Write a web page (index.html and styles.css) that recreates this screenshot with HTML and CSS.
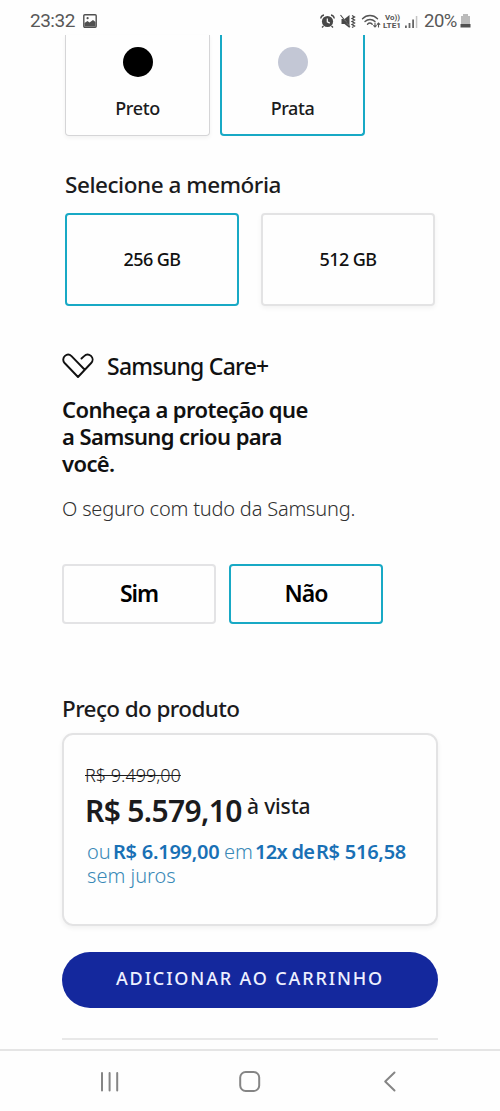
FILE: index.html
```
<!DOCTYPE html>
<html lang="pt-BR">
<head>
<meta charset="utf-8">
<title>Samsung</title>
<link rel="stylesheet" href="styles.css">
</head>
<body>
<header class="status">
  <span class="clock">23:32</span>
  <svg class="photo" width="14" height="14" viewBox="0 0 14 14"><rect x=".8" y=".8" width="12.4" height="12.4" rx="1" fill="none" stroke="#505050" stroke-width="1.4"/><path d="M1.5 9 4.500 7l2 1.500L10 6l2.500 2V12.500h-11z" fill="#505050"/><circle cx="4.600" cy="4.200" r="1.100" fill="#505050"/></svg>
  <svg class="signals" width="101" height="20" viewBox="0 0 101 20">
    <circle cx="7.500" cy="10.500" r="5.600" fill="#484848"/>
    <path d="M.7 7.500C1 5.500 2.200 4.300 4 4M14.300 7.500C14 5.500 12.800 4.300 11 4M3.500 15 2 16.500M11.500 15l1.500 1.500" fill="none" stroke="#484848" stroke-width="1.300"/>
    <path d="M7.300 7.500v3.300l2.500 1.300" fill="none" stroke="#fff" stroke-width="1.200"/>
    <path d="M21.500 8h3l5-4v13l-5-4h-3z" fill="#484848"/>
    <path d="M21 4.500l9.500 12" stroke="#fff" stroke-width=".8"/>
    <path d="M20.500 4l9.500 12" stroke="#484848" stroke-width="1.100"/>
    <path d="M32 4.500l2.500 1.500-2.500 1.500 2.500 1.500-2.500 1.500 2.500 1.500-2.500 1.500 2.500 1.500-2.500 1.500" fill="none" stroke="#484848" stroke-width="1.300"/>
    <g fill="none" stroke="#555" stroke-width="1.400" stroke-linecap="round">
      <path d="M42.500 7.700c4.300-4.300 10.700-4.300 15 0M45 10.600c2.900-2.900 7.100-2.900 10 0M47.500 13.200c1.400-1.400 3.300-1.400 4.700 0"/>
      <path d="M55 12v4m-1.300-1.300L55 16l1.300-1.300M58.500 16v-4m-1.300 1.300 1.300-1.300 1.300 1.300" stroke-width="1.100"/>
    </g>
    <text x="65" y="9" class="volte" textLength="15" lengthAdjust="spacingAndGlyphs">Vo))</text>
    <text x="63" y="17.300" class="volte" textLength="18" lengthAdjust="spacingAndGlyphs">LTE1</text>
    <g fill="#666"><path d="M85 14.500h1.800v2.500H85zM88.600 12h1.800v5h-1.800zM92.200 8.500h1.800v8.500h-1.800z"/><path d="M95.800 5h1.500v12h-1.500z" fill="#c4c4c4"/></g>
  </svg>
  <span class="percent">20%</span>
  <svg class="battery" width="11" height="16" viewBox="0 0 11 16"><path d="M3 1h5v2h2v9H1V3h2z" fill="#bbb"/><path d="M.5 11h10v3.500H.5z" fill="#505050"/></svg>
</header>
<main class="page">
  <div class="colors">
    <div class="color"><i class="dot dot-black"></i><span>Preto</span></div>
    <div class="color selected"><i class="dot dot-silver"></i><span>Prata</span></div>
  </div>
  <h2 class="memory-title">Selecione a memória</h2>
  <div class="memory">
    <div class="size selected">256 GB</div>
    <div class="size">512 GB</div>
  </div>
  <div class="care">
    <svg width="32" height="26" viewBox="0 0 32 26" fill="none" stroke="#111" stroke-width="1.900" stroke-linejoin="round" stroke-linecap="round"><path d="M22.500 16.500 9.500 3.200C7.500 1.200 5.200 1 3 2.900.9 4.800.6 7.800 2.600 10L16 24 29.200 10c2-2.200 1.800-5.200-.2-7.100-2.200-1.900-5-1.700-6.900.2L19.500 5.500"/></svg>
    <span>Samsung Care+</span>
  </div>
  <h3 class="pitch">Conheça a proteção que<br>a Samsung criou para<br>você.</h3>
  <p class="insurance">O seguro com tudo da Samsung.</p>
  <div class="choices">
    <div class="choice">Sim</div>
    <div class="choice selected">Não</div>
  </div>
  <h2 class="price-title">Preço do produto</h2>
  <section class="price">
    <div class="old"><s>R$ 9.499,00</s></div>
    <div class="now"><b>R$ 5.579,10</b><span>à vista</span></div>
    <div class="plan"><span class="ou">ou</span><b class="total">R$ 6.199,00</b><span class="em">em</span><b class="times">12x de</b><b class="part">R$ 516,58</b></div>
    <div class="plan juros">sem juros</div>
  </section>
  <div class="buy">ADICIONAR AO CARRINHO</div>
  <div class="rule"></div>
</main>
<nav class="nav">
  <svg width="20" height="22" viewBox="0 0 20 22" stroke="#858585" stroke-width="2" stroke-linecap="round"><path d="M2 2v17.500M9.600 2v17.500M17.200 2v17.500"/></svg>
  <svg class="home" width="22" height="22" viewBox="0 0 22 22" fill="none" stroke="#858585" stroke-width="2"><rect x="1.200" y="1" width="19" height="19" rx="5.500"/></svg>
  <svg width="14" height="22" viewBox="0 0 14 22" fill="none" stroke="#858585" stroke-width="2" stroke-linecap="round" stroke-linejoin="round"><path d="M11.500 1.500 2.200 10.500l9.300 9"/></svg>
</nav>
</body>
</html>
```
FILE: styles.css
```
* { box-sizing: border-box; }
body { margin: 0; width: 500px; height: 1111px; overflow: hidden; background: #fefefe; color: #1b1b1d; font-family: "Noto Sans", sans-serif; }
h2, h3, p { margin: 0; white-space: nowrap; }
svg { display: block; flex: none; }

.status { height: 35px; display: flex; align-items: center; padding: 7px 0 0 30px; color: #585858; font: 19px/28px Roboto, sans-serif; }
.clock { width: 53px; letter-spacing: -.5px; }
.signals { margin-left: 223px; }
.volte { font: 700 7.500px Roboto, sans-serif; fill: #555; }
.percent { width: 36px; margin-left: 3px; font-size: 18.500px; letter-spacing: -.5px; }

.page { height: 1014px; padding: 0 62px; }
.selected.selected { border: 2px solid #18a9c5; box-shadow: none; }
.colors { display: flex; gap: 10px; padding-left: 3px; }
.color { width: 145px; height: 101px; display: flex; flex-direction: column; align-items: center; border: 1px solid #d5d5d7; border-width: 0 1px 1px; border-radius: 0 0 4px 4px; box-shadow: 0 2px 4px #0000000d; font-weight: 500; font-size: 18px; line-height: 24px; letter-spacing: -.4px; }
.color.selected.selected { border-top: 0; }
.dot { width: 30px; height: 30px; margin: 12px 0 19px; border-radius: 50%; }
.dot-black { background: #000; }
.dot-silver { background: #c3c7d5; }

.memory-title { margin-top: 34px; padding-left: 3px; font-size: 22.500px; line-height: 30px; font-weight: 500; letter-spacing: -.45px; }
.memory { display: flex; gap: 22px; padding: 13px 0 0 3px; }
.size { width: 174px; height: 93px; display: flex; align-items: center; justify-content: center; padding-bottom: 2px; border: 2px solid #e3e3e4; border-radius: 4px; box-shadow: 0 2px 5px #0000000d; color: #111; font-size: 18px; font-weight: 500; letter-spacing: -.6px; }

.care { display: flex; gap: 13px; align-items: center; margin-top: 45px; height: 30px; color: #111; font-size: 23px; font-weight: 500; letter-spacing: -.75px; white-space: nowrap; }
.pitch { margin-top: 15px; color: #111; font-size: 22px; font-weight: 600; line-height: 27px; letter-spacing: -.6px; }
.insurance { margin-top: 17px; padding-bottom: 1px; color: #303030; font-size: 20px; font-weight: 350; line-height: 30px; letter-spacing: -.2px; }
.choices { display: flex; gap: 13px; margin-top: 39px; }
.choice { width: 154px; height: 60px; display: flex; align-items: center; justify-content: center; padding-bottom: 3px; border: 2px solid #e3e3e5; border-radius: 4px; color: #000; font-size: 23px; font-weight: 600; letter-spacing: -1px; }

.price-title { margin-top: 70px; font-size: 22.500px; font-weight: 500; line-height: 30px; letter-spacing: -.6px; }
.price { height: 193px; margin-top: 9px; padding: 28px 0 0 21px; border: 2px solid #e3e3e4; border-radius: 11px; box-shadow: 0 2px 5px #0000000f; white-space: nowrap; }
.old { font-size: 18px; font-weight: 300; line-height: 24px; }
.now { display: flex; align-items: flex-start; height: 50px; }
.now b { width: 162px; font-size: 30px; font-weight: 600; line-height: 48px; letter-spacing: -.65px; }
.now span { font-size: 21px; font-weight: 500; line-height: 38px; letter-spacing: -.15px; }
.plan { display: flex; padding-left: 2px; height: 24px; color: #3989b7; font-size: 20px; font-weight: 300; line-height: 30px; }
.plan b { color: #1970b5; font-weight: 600; letter-spacing: -.25px; }
.ou { width: 26px; }
.total { width: 111px; }
.em { width: 31px; }
.plan .times { width: 61px; letter-spacing: -.7px; }
.buy { display: flex; align-items: center; justify-content: center; height: 56px; margin-top: 26px; padding-bottom: 4px; border-radius: 28px; background: #14289d; color: #eef0ff; font-size: 18px; font-weight: 500; letter-spacing: 1.850px; white-space: nowrap; }
.rule { height: 2px; margin-top: 30px; background: #e8e8e8; }

.nav { height: 62px; display: flex; justify-content: space-between; align-items: center; padding: 2px 103px 0 100px; border-top: 2px solid #e5e5e5; }
.home { margin-right: 4px; }
```
